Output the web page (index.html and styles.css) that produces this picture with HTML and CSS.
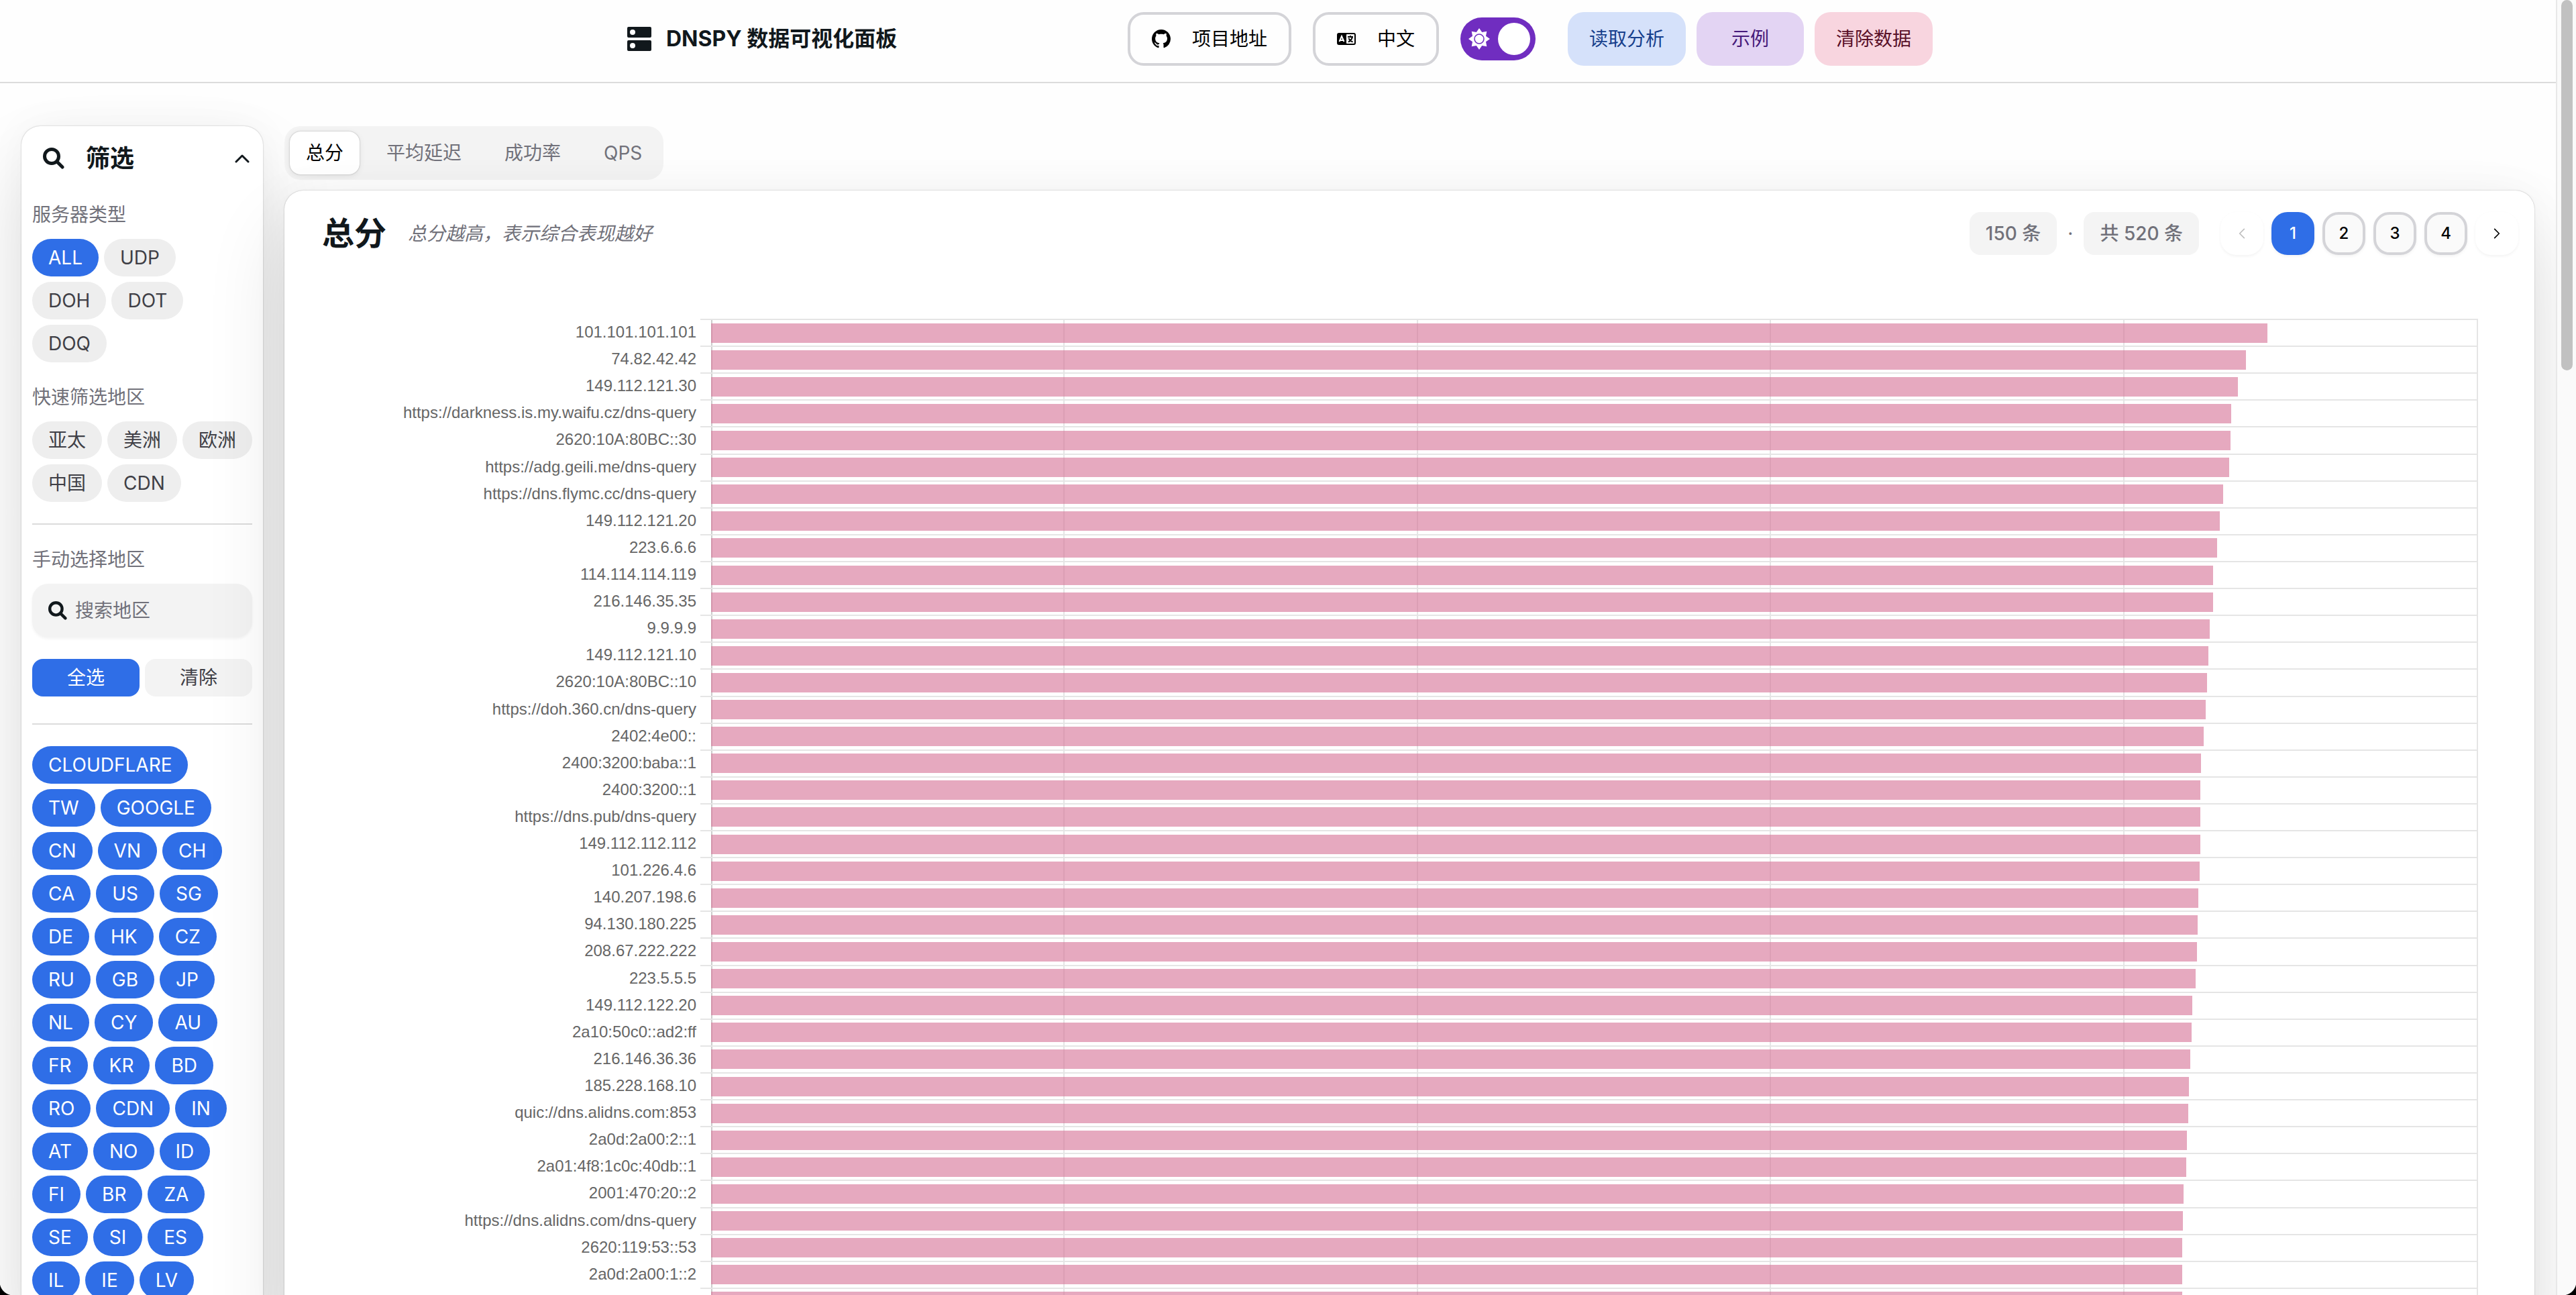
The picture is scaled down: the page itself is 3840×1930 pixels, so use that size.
FILE: index.html
```html
<!DOCTYPE html>
<html lang="zh-CN">
<head>
<meta charset="utf-8">
<meta name="viewport" content="width=device-width, initial-scale=1">
<title>DNSPY 数据可视化面板</title>
<link rel="stylesheet" href="styles.css">
</head>
<body>
<header class="navbar">
  <div class="navbar-inner">
    <h1 class="brand">
      <svg class="brand-icon" viewBox="0 0 36 36" aria-hidden="true"><path fill-rule="evenodd" d="M2 0h32a2 2 0 0 1 2 2v12a2 2 0 0 1-2 2H2a2 2 0 0 1-2-2V2a2 2 0 0 1 2-2zm6 4a4 4 0 1 0 0 8 4 4 0 0 0 0-8zM2 20h32a2 2 0 0 1 2 2v12a2 2 0 0 1-2 2H2a2 2 0 0 1-2-2V22a2 2 0 0 1 2-2zm6 4a4 4 0 1 0 0 8 4 4 0 0 0 0-8z"/></svg>
      DNSPY 数据可视化面板
    </h1>
    <div class="nav-actions">
      <a class="btn btn-outline" href="#project">
        <svg class="btn-icon" viewBox="0 0 16 16" aria-hidden="true"><path d="M8 0C3.58 0 0 3.58 0 8c0 3.54 2.29 6.53 5.47 7.59.4.07.55-.17.55-.38 0-.19-.01-.82-.01-1.49-2.01.37-2.53-.49-2.69-.94-.09-.23-.48-.94-.82-1.13-.28-.15-.68-.52-.01-.53.63-.01 1.08.58 1.23.82.72 1.21 1.87.87 2.33.66.07-.52.28-.87.51-1.07-1.78-.2-3.64-.89-3.64-3.95 0-.87.31-1.59.82-2.15-.08-.2-.36-1.02.08-2.12 0 0 .67-.21 2.2.82.64-.18 1.32-.27 2-.27s1.36.09 2 .27c1.53-1.04 2.2-.82 2.2-.82.44 1.1.16 1.92.08 2.12.51.56.82 1.27.82 2.15 0 3.07-1.87 3.75-3.65 3.95.29.25.54.73.54 1.48 0 1.07-.01 1.93-.01 2.2 0 .21.15.46.55.38A8.01 8.01 0 0 0 16 8c0-4.42-3.58-8-8-8z"/></svg>
        项目地址
      </a>
      <button class="btn btn-outline" type="button">
        <svg class="btn-icon" viewBox="0 0 28 28" aria-hidden="true"><rect y="5" width="28" height="18" rx="3"/><rect x="14" y="7" width="12" height="14" rx="1" fill="#fff"/><g fill="none" stroke-width="2"><path stroke="#fff" d="M3.500 18 7 10l3.500 8M5 16h4"/><path stroke="#000" d="M16 11h8M20 9v2M23 11c-1 4-3 6-6 7.500M17.500 13c1 2.500 3.500 4.500 6 5.500"/></g></svg>
        中文
      </button>
      <label class="switch">
        <input class="switch-input" type="checkbox" role="switch" aria-label="主题" checked>
        <svg class="switch-icon" viewBox="0 0 32 32" aria-hidden="true"><path fill="#fff" d="m16 0 4.200 6 7.100-1.300L26 11.800l6 4.200-6 4.200 1.300 7.100-7.100-1.300L16 32l-4.200-6-7.100 1.300L6 20.200 0 16l6-4.200-1.300-7.100L11.800 6z"/><circle cx="16" cy="16" r="7" fill="#fff" stroke="#702dc0" stroke-width="1.500"/></svg>
      </label>
      <div class="nav-data">
        <button class="btn btn-blue" type="button">读取分析</button>
        <button class="btn btn-purple" type="button">示例</button>
        <button class="btn btn-red" type="button">清除数据</button>
      </div>
    </div>
  </div>
</header>

<div class="layout">
  <aside class="card sidebar">
    <button class="sidebar-head" type="button" aria-expanded="true">
      <svg class="head-icon" viewBox="0 0 32 32" aria-hidden="true"><circle cx="13" cy="13" r="10.500"/><path d="m21 21 8 8"/></svg>
      <span class="head-title">筛选</span>
      <svg class="chevron" viewBox="0 0 22 14" aria-hidden="true"><path d="M2 12 11 3l9 9"/></svg>
    </button>
    <div class="sidebar-body">
      <section class="filter">
        <h2 class="filter-label">服务器类型</h2>
        <div class="chips">
          <button class="chip on" type="button">ALL</button><button class="chip" type="button">UDP</button><button class="chip" type="button">DOH</button><button class="chip" type="button">DOT</button><button class="chip" type="button">DOQ</button>
        </div>
      </section>
      <section class="filter">
        <h2 class="filter-label">快速筛选地区</h2>
        <div class="chips">
          <button class="chip" type="button">亚太</button><button class="chip" type="button">美洲</button><button class="chip" type="button">欧洲</button><button class="chip" type="button">中国</button><button class="chip" type="button">CDN</button>
        </div>
      </section>
      <hr class="divider">
      <section class="filter">
        <label class="filter-label" for="region">手动选择地区</label>
        <div class="search">
          <svg class="search-icon" viewBox="0 0 32 32" aria-hidden="true"><circle cx="13" cy="13" r="10.500"/><path d="m21 21 8 8"/></svg>
          <input class="search-input" id="region" type="text" placeholder="搜索地区">
        </div>
      </section>
      <div class="pair">
        <button class="mini on" type="button">全选</button>
        <button class="mini" type="button">清除</button>
      </div>
      <hr class="divider divider-late">
      <div class="chips regions">
        <button class="chip on" type="button">CLOUDFLARE</button><button class="chip on" type="button">TW</button><button class="chip on" type="button">GOOGLE</button><button class="chip on" type="button">CN</button><button class="chip on" type="button">VN</button><button class="chip on" type="button">CH</button><button class="chip on" type="button">CA</button><button class="chip on" type="button">US</button><button class="chip on" type="button">SG</button><button class="chip on" type="button">DE</button><button class="chip on" type="button">HK</button><button class="chip on" type="button">CZ</button><button class="chip on" type="button">RU</button><button class="chip on" type="button">GB</button><button class="chip on" type="button">JP</button><button class="chip on" type="button">NL</button><button class="chip on" type="button">CY</button><button class="chip on" type="button">AU</button><button class="chip on" type="button">FR</button><button class="chip on" type="button">KR</button><button class="chip on" type="button">BD</button><button class="chip on" type="button">RO</button><button class="chip on" type="button">CDN</button><button class="chip on" type="button">IN</button><button class="chip on" type="button">AT</button><button class="chip on" type="button">NO</button><button class="chip on" type="button">ID</button><button class="chip on" type="button">FI</button><button class="chip on" type="button">BR</button><button class="chip on" type="button">ZA</button><button class="chip on" type="button">SE</button><button class="chip on" type="button">SI</button><button class="chip on" type="button">ES</button><button class="chip on" type="button">IL</button><button class="chip on" type="button">IE</button><button class="chip on" type="button">LV</button>
      </div>
    </div>
  </aside>

  <main class="main">
    <div class="tabs" role="tablist">
      <button class="tab selected" type="button" role="tab" aria-selected="true">总分</button>
      <button class="tab" type="button" role="tab">平均延迟</button>
      <button class="tab" type="button" role="tab">成功率</button>
      <button class="tab" type="button" role="tab">QPS</button>
    </div>
    <section class="card panel">
      <div class="panel-head">
        <h2 class="panel-title">总分</h2>
        <p class="panel-note">总分越高，表示综合表现越好</p>
        <div class="counts"><span class="count">150 条</span><span class="dot">·</span><span class="count">共 520 条</span></div>
        <nav class="pager" aria-label="分页">
          <button class="page ghost" type="button" aria-label="上一页" disabled><svg class="page-arrow" viewBox="0 0 12 20"><path d="m10 2-8 8 8 8"/></svg></button>
          <button class="page current" type="button">1</button>
          <button class="page" type="button">2</button>
          <button class="page" type="button">3</button>
          <button class="page" type="button">4</button>
          <button class="page ghost" type="button" aria-label="下一页"><svg class="page-arrow" viewBox="0 0 12 20"><path d="m2 2 8 8-8 8"/></svg></button>
        </nav>
      </div>
      <ol class="chart">
        <li class="row"><span class="host">101.101.101.101</span><span class="track"><span class="bar" style="width:88.08%"></span></span></li>
        <li class="row"><span class="host">74.82.42.42</span><span class="track"><span class="bar" style="width:86.86%"></span></span></li>
        <li class="row"><span class="host">149.112.121.30</span><span class="track"><span class="bar" style="width:86.4%"></span></span></li>
        <li class="row"><span class="host">https://darkness.is.my.waifu.cz/dns-query</span><span class="track"><span class="bar" style="width:86.03%"></span></span></li>
        <li class="row"><span class="host">2620:10A:80BC::30</span><span class="track"><span class="bar" style="width:85.99%"></span></span></li>
        <li class="row"><span class="host">https://adg.geili.me/dns-query</span><span class="track"><span class="bar" style="width:85.92%"></span></span></li>
        <li class="row"><span class="host">https://dns.flymc.cc/dns-query</span><span class="track"><span class="bar" style="width:85.57%"></span></span></li>
        <li class="row"><span class="host">149.112.121.20</span><span class="track"><span class="bar" style="width:85.37%"></span></span></li>
        <li class="row"><span class="host">223.6.6.6</span><span class="track"><span class="bar" style="width:85.22%"></span></span></li>
        <li class="row"><span class="host">114.114.114.119</span><span class="track"><span class="bar" style="width:84.99%"></span></span></li>
        <li class="row"><span class="host">216.146.35.35</span><span class="track"><span class="bar" style="width:84.99%"></span></span></li>
        <li class="row"><span class="host">9.9.9.9</span><span class="track"><span class="bar" style="width:84.8%"></span></span></li>
        <li class="row"><span class="host">149.112.121.10</span><span class="track"><span class="bar" style="width:84.74%"></span></span></li>
        <li class="row"><span class="host">2620:10A:80BC::10</span><span class="track"><span class="bar" style="width:84.66%"></span></span></li>
        <li class="row"><span class="host">https://doh.360.cn/dns-query</span><span class="track"><span class="bar" style="width:84.6%"></span></span></li>
        <li class="row"><span class="host">2402:4e00::</span><span class="track"><span class="bar" style="width:84.47%"></span></span></li>
        <li class="row"><span class="host">2400:3200:baba::1</span><span class="track"><span class="bar" style="width:84.32%"></span></span></li>
        <li class="row"><span class="host">2400:3200::1</span><span class="track"><span class="bar" style="width:84.3%"></span></span></li>
        <li class="row"><span class="host">https://dns.pub/dns-query</span><span class="track"><span class="bar" style="width:84.3%"></span></span></li>
        <li class="row"><span class="host">149.112.112.112</span><span class="track"><span class="bar" style="width:84.28%"></span></span></li>
        <li class="row"><span class="host">101.226.4.6</span><span class="track"><span class="bar" style="width:84.23%"></span></span></li>
        <li class="row"><span class="host">140.207.198.6</span><span class="track"><span class="bar" style="width:84.15%"></span></span></li>
        <li class="row"><span class="host">94.130.180.225</span><span class="track"><span class="bar" style="width:84.13%"></span></span></li>
        <li class="row"><span class="host">208.67.222.222</span><span class="track"><span class="bar" style="width:84.1%"></span></span></li>
        <li class="row"><span class="host">223.5.5.5</span><span class="track"><span class="bar" style="width:84.02%"></span></span></li>
        <li class="row"><span class="host">149.112.122.20</span><span class="track"><span class="bar" style="width:83.81%"></span></span></li>
        <li class="row"><span class="host">2a10:50c0::ad2:ff</span><span class="track"><span class="bar" style="width:83.77%"></span></span></li>
        <li class="row"><span class="host">216.146.36.36</span><span class="track"><span class="bar" style="width:83.7%"></span></span></li>
        <li class="row"><span class="host">185.228.168.10</span><span class="track"><span class="bar" style="width:83.62%"></span></span></li>
        <li class="row"><span class="host">quic://dns.alidns.com:853</span><span class="track"><span class="bar" style="width:83.6%"></span></span></li>
        <li class="row"><span class="host">2a0d:2a00:2::1</span><span class="track"><span class="bar" style="width:83.52%"></span></span></li>
        <li class="row"><span class="host">2a01:4f8:1c0c:40db::1</span><span class="track"><span class="bar" style="width:83.49%"></span></span></li>
        <li class="row"><span class="host">2001:470:20::2</span><span class="track"><span class="bar" style="width:83.33%"></span></span></li>
        <li class="row"><span class="host">https://dns.alidns.com/dns-query</span><span class="track"><span class="bar" style="width:83.3%"></span></span></li>
        <li class="row"><span class="host">2620:119:53::53</span><span class="track"><span class="bar" style="width:83.26%"></span></span></li>
        <li class="row"><span class="host">2a0d:2a00:1::2</span><span class="track"><span class="bar" style="width:83.26%"></span></span></li>
        <li class="row"><span class="host"></span><span class="track"><span class="bar" style="width:83.26%"></span></span></li>
      </ol>
    </section>
  </main>
</div>
<div class="scrollbar" aria-hidden="true"><div class="thumb"></div></div>
</body>
</html>
```
FILE: styles.css
```css
:root {
  --blue: #2f6ee7;
  --ink: #11181c;
  --muted: #71717a;
  --line: #dcdcdc;
}
* { box-sizing: border-box; }
html { height: 100%; overflow: hidden; }
body {
  margin: 0;
  height: 100%;
  overflow: hidden;
  padding-right: 30px;
  background: #fefefe;
  color: var(--ink);
  font: 400 28px/40px Inter, "Noto Sans CJK SC", sans-serif;
}
/* rounded lower corners of the window */
body::before, body::after {
  content: "";
  position: fixed;
  bottom: 0;
  z-index: 5;
  width: 20px;
  height: 20px;
}
body::before { left: 0; background: radial-gradient(circle at 100% 0, transparent 20px, #000 21px); }
body::after { right: 0; background: radial-gradient(circle at 0 0, transparent 20px, #000 21px); }
h1, h2, p, ol { margin: 0; padding: 0; font: inherit; }
button, input { margin: 0; padding: 0; border: 0; background: none; color: inherit; font: inherit; }
a { color: inherit; text-decoration: none; }
svg { display: block; flex: none; }

.navbar { border-bottom: 2px solid var(--line); padding: 18px 0 24px 6px; }
.navbar-inner {
  display: flex;
  align-items: center;
  justify-content: space-between;
  max-width: 1946px;
  margin: 0 auto;
}
.brand { display: flex; align-items: center; gap: 22px; font-size: 32px; font-weight: 700; }
.brand-icon { width: 36px; height: 36px; fill: var(--ink); }
.nav-actions { display: flex; align-items: center; gap: 32px; }
.nav-data { display: flex; gap: 16px; margin-left: 16px; }
.btn {
  display: flex;
  align-items: center;
  justify-content: center;
  gap: 32px;
  min-width: 160px;
  height: 80px;
  padding: 0 32px;
  border-radius: 24px;
  color: #000;
}
.btn-outline { border: 4px solid #d4d4d8; }
.btn-icon { width: 28px; height: 28px; }
.btn-blue { background: #d5e1fa; color: #173f8c; }
.btn-purple { background: #e3d4f3; color: #461a7a; }
.btn-red { background: #f8d5df; color: #591028; }
.switch { position: relative; display: flex; }
.switch-input {
  appearance: none;
  display: flex;
  align-items: center;
  justify-content: flex-end;
  width: 112px;
  height: 64px;
  padding: 8px;
  border-radius: 32px;
  background: #702dc0;
}
.switch-input::before { content: ""; width: 48px; height: 48px; border-radius: 50%; background: #fff; }
.switch-icon { position: absolute; left: 12px; top: 16px; width: 32px; height: 32px; }

.layout { display: flex; align-items: flex-start; gap: 32px; padding: 64px 32px; }
.card {
  border-radius: 28px;
  background: #fff;
  box-shadow: 0 0 60px rgba(0, 0, 0, .04), 0 60px 120px rgba(0, 0, 0, .12), 0 0 2px rgba(0, 0, 0, .3);
}
.sidebar { flex: none; width: 360px; padding-bottom: 32px; }
.sidebar-head { display: flex; align-items: center; width: 100%; height: 96px; padding: 0 20px 0 32px; text-align: left; }
.head-icon, .search-icon { fill: none; stroke: var(--ink); stroke-width: 5; stroke-linecap: round; }
.head-icon { width: 32px; height: 32px; }
.head-title { flex: 1; margin-left: 32px; font-size: 36px; font-weight: 600; }
.chevron { width: 22px; height: 14px; fill: none; stroke: var(--ink); stroke-width: 3; stroke-linecap: round; stroke-linejoin: round; }
.sidebar-body { display: flex; flex-direction: column; gap: 32px; padding: 16px 16px 0; }
.filter { display: flex; flex-direction: column; gap: 16px; }
.filter-label { color: var(--muted); }
.chips { display: flex; flex-wrap: wrap; gap: 8px; margin-right: -4px; }
.regions { margin-right: 4px; }
.chip { height: 56px; padding: 0 24px; border-radius: 28px; background: #eee; color: #3f3f46; }
.chip.on, .mini.on { background: var(--blue); color: #fff; }
.divider { width: 100%; height: 2px; margin: 0; border: 0; background: var(--line); }
.divider-late { margin-top: 8px; }
.search {
  display: flex;
  align-items: center;
  gap: 12px;
  height: 80px;
  padding: 0 24px;
  border-radius: 24px;
  background: #f3f3f3;
  box-shadow: 0 2px 4px rgba(0, 0, 0, .05);
}
.search-icon { width: 28px; height: 28px; }
.search-input { flex: 1; min-width: 0; outline: 0; }
.search-input::placeholder { color: var(--muted); opacity: 1; }
.pair { display: flex; gap: 8px; }
.mini { flex: 1; height: 56px; border-radius: 16px; background: #f3f3f3; color: #3f3f46; }

.main { display: flex; flex: 1; flex-direction: column; align-items: flex-start; gap: 16px; min-width: 0; }
.tabs { display: flex; gap: 16px; padding: 8px; border-radius: 24px; background: #f3f3f3; }
.tab { height: 64px; padding: 0 24px; border-radius: 16px; color: var(--muted); }
.tab.selected { background: #fff; color: #000; box-shadow: 0 0 2px rgba(0, 0, 0, .3), 0 2px 10px rgba(0, 0, 0, .08); }
.panel { width: 100%; padding: 32px 24px; }
.panel-head { display: flex; align-items: center; padding-left: 32px; }
.panel-title { font-size: 48px; font-weight: 700; }
.panel-note { margin-left: 32px; color: var(--muted); font-style: italic; }
.counts { display: flex; align-items: center; gap: 16px; margin-left: auto; color: var(--muted); font-weight: 500; }
.count { padding: 12px 24px; border-radius: 16px; background: #f4f4f4; }
.dot { font-weight: 400; }
.pager { display: flex; gap: 12px; margin-left: 32px; }
.page {
  display: flex;
  align-items: center;
  justify-content: center;
  width: 64px;
  height: 64px;
  border: 4px solid #d4d4d8;
  border-radius: 24px;
  background: #fafafa;
  box-shadow: 0 2px 4px rgba(0, 0, 0, .05);
  color: #000;
  font-size: 24px;
  font-weight: 500;
}
.page.current { border-color: var(--blue); background: var(--blue); color: #fff; }
.page.ghost { border-color: transparent; background: #fff; }
.page-arrow { width: 10px; height: 18px; fill: none; stroke: #000; stroke-width: 2; stroke-linecap: round; stroke-linejoin: round; }
.page:disabled .page-arrow { opacity: .25; }

.chart {
  display: grid;
  grid-template-rows: repeat(37, 1fr);
  height: 1484px;
  margin: 95px 60px 0 0;
  list-style: none;
}
.row { display: flex; align-items: stretch; }
.host {
  flex: none;
  width: 596px;
  padding-right: 6px;
  color: #666;
  font: 24px/40px "Liberation Sans", Arial, sans-serif;
  text-align: right;
}
/* the rule of each row starts with a tick to the left of the axis */
.track {
  display: flex;
  flex: 1;
  align-items: center;
  padding-left: 16px;
  border-top: 2px solid #e5e5e5;
  background:
    linear-gradient(#ccc, #ccc) 0 0 / 2px 100% no-repeat content-box,
    repeating-linear-gradient(90deg, transparent 0 calc(20% - 2px), #e5e5e5 calc(20% - 2px) 20%) content-box;
}
.bar { height: 29px; background: rgba(213, 112, 148, .6); }

.scrollbar {
  position: fixed;
  top: 0;
  right: 0;
  bottom: 0;
  width: 30px;
  padding: 0 5px 0 6px;
  border-left: 2px solid #e8e8e8;
  background: #fafafa;
}
.thumb { height: 552px; border-radius: 9px; background: #c1c1c1; }
```
